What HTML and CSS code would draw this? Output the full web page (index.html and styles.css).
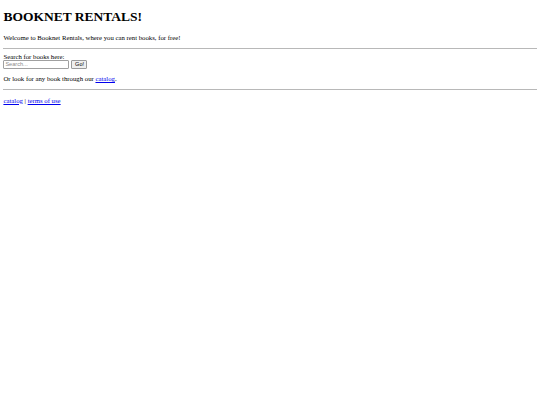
FILE: index.html
```html
<!DOCTYPE html>
<html>
<head>
<meta charset="utf-8">
<title>Booknet Rentals</title>
<link rel="stylesheet" href="styles.css">
</head>
<body class="page">
<h1 class="title">BOOKNET RENTALS!</h1>
<p class="text">Welcome to Booknet Rentals, where you can rent books, for free!</p>
<hr class="rule">
<form class="search">
<label class="label" for="q">Search for books here:</label><br>
<input class="field" id="q" type="text" placeholder="Search..."> <button class="btn" type="button">Go!</button>
</form>
<p class="text">Or look for any book through our <a class="link" href="#">catalog</a>.</p>
<hr class="rule">
<p class="text"><a class="link" href="#">catalog</a> | <a class="link" href="#">terms of use</a></p>
</body>
</html>
```
FILE: styles.css
```css
html { background: #fff; }
.page {
  margin: 3.4px;
  font-family: "Liberation Serif", "Times New Roman", serif;
  font-size: 6.75px;
  color: #000;
}
.title {
  font-size: 13.5px;
  font-weight: bold;
  margin: 6px 0 9px;
}
.text { margin: 6.75px 0; }
.rule {
  margin: 3.4px 0;
  border: 0;
  border-top: 1px solid #b8b8b8;
  height: 0;
}
.search { margin: 0; }
.field {
  box-sizing: border-box;
  width: 66px;
  height: 9px;
  font-family: "Liberation Sans", Arial, sans-serif;
  font-size: 5.6px;
  padding: 0 1px;
  border: 1px solid #a0a0a0;
  border-radius: 1px;
  margin: 0;
  vertical-align: middle;
}
.field::placeholder { color: #8a8a8a; }
.btn {
  box-sizing: border-box;
  font-family: "Liberation Sans", Arial, sans-serif;
  font-size: 5.6px;
  padding: 0 3px;
  height: 9px;
  width: 16px;
  border: 1px solid #9a9a9a;
  border-radius: 1px;
  background: #efefef;
  margin: 0;
  vertical-align: middle;
  color: #000;
}
.link { color: #00e; text-decoration: underline; }
```
